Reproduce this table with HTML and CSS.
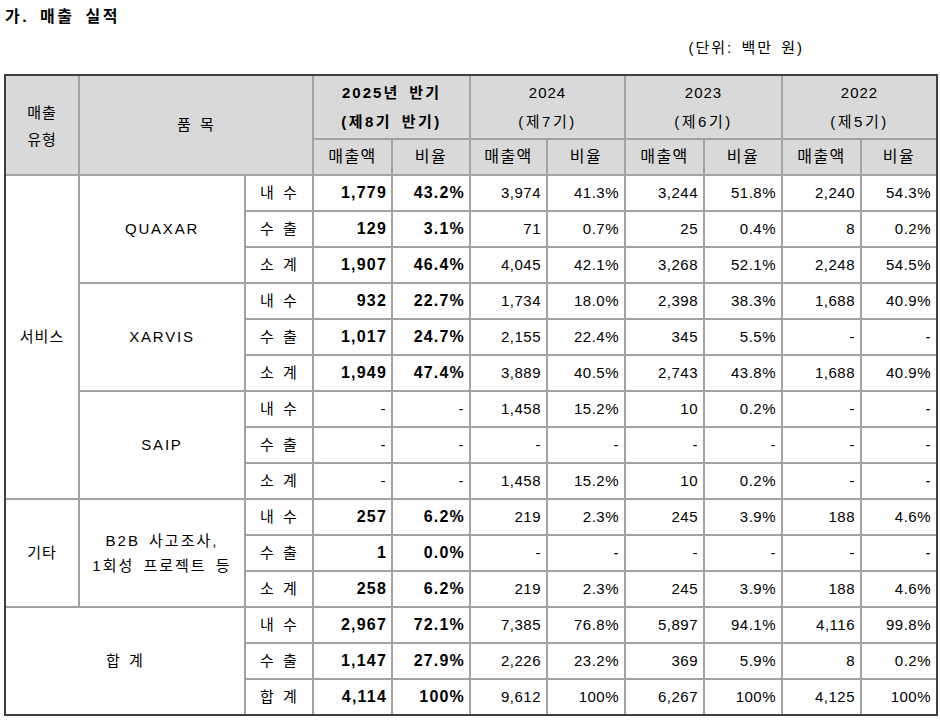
FILE: index.html
```html
<!DOCTYPE html>
<html lang="ko">
<head>
<meta charset="utf-8">
<title>매출 실적</title>
<link rel="stylesheet" href="styles.css">
</head>
<body>
<h1 class="title">가. 매출 실적</h1>
<p class="unit">(단위: 백만 원)</p>
<table class="sales">
  <colgroup>
    <col class="c1"><col class="c2"><col class="c3"><col class="c4"><col class="c5"><col class="c6"><col class="c7"><col class="c8"><col class="c9"><col class="c10"><col class="c11">
  </colgroup>
  <thead>
    <tr class="h1">
      <th rowspan="2" class="type"><span>매출</span><br><span>유형</span></th>
      <th rowspan="2" colspan="2" class="ws">품 목</th>
      <th colspan="2" class="period strong"><span class="y">2025년 반기</span><br><span class="p">(제8기 반기)</span></th>
      <th colspan="2" class="period"><span class="y">2024</span><br><span class="p">(제7기)</span></th>
      <th colspan="2" class="period"><span class="y">2023</span><br><span class="p">(제6기)</span></th>
      <th colspan="2" class="period"><span class="y">2022</span><br><span class="p">(제5기)</span></th>
    </tr>
    <tr class="h2">
      <th class="amt">매출액</th><th class="rat">비율</th>
      <th class="amt">매출액</th><th class="rat">비율</th>
      <th class="amt">매출액</th><th class="rat">비율</th>
      <th class="amt">매출액</th><th class="rat">비율</th>
    </tr>
  </thead>
  <tbody>
    <tr>
      <td rowspan="9" class="label">서비스</td>
      <td rowspan="3" class="label latin">QUAXAR</td>
      <td class="sub">내 수</td>
      <td class="num b">1,779</td><td class="num b">43.2%</td>
      <td class="num">3,974</td><td class="num">41.3%</td>
      <td class="num">3,244</td><td class="num">51.8%</td>
      <td class="num">2,240</td><td class="num">54.3%</td>
    </tr>
    <tr>
      <td class="sub">수 출</td>
      <td class="num b">129</td><td class="num b">3.1%</td>
      <td class="num">71</td><td class="num">0.7%</td>
      <td class="num">25</td><td class="num">0.4%</td>
      <td class="num">8</td><td class="num">0.2%</td>
    </tr>
    <tr>
      <td class="sub">소 계</td>
      <td class="num b">1,907</td><td class="num b">46.4%</td>
      <td class="num">4,045</td><td class="num">42.1%</td>
      <td class="num">3,268</td><td class="num">52.1%</td>
      <td class="num">2,248</td><td class="num">54.5%</td>
    </tr>
    <tr>
      <td rowspan="3" class="label latin">XARVIS</td>
      <td class="sub">내 수</td>
      <td class="num b">932</td><td class="num b">22.7%</td>
      <td class="num">1,734</td><td class="num">18.0%</td>
      <td class="num">2,398</td><td class="num">38.3%</td>
      <td class="num">1,688</td><td class="num">40.9%</td>
    </tr>
    <tr>
      <td class="sub">수 출</td>
      <td class="num b">1,017</td><td class="num b">24.7%</td>
      <td class="num">2,155</td><td class="num">22.4%</td>
      <td class="num">345</td><td class="num">5.5%</td>
      <td class="num">-</td><td class="num">-</td>
    </tr>
    <tr>
      <td class="sub">소 계</td>
      <td class="num b">1,949</td><td class="num b">47.4%</td>
      <td class="num">3,889</td><td class="num">40.5%</td>
      <td class="num">2,743</td><td class="num">43.8%</td>
      <td class="num">1,688</td><td class="num">40.9%</td>
    </tr>
    <tr>
      <td rowspan="3" class="label latin">SAIP</td>
      <td class="sub">내 수</td>
      <td class="num">-</td><td class="num">-</td>
      <td class="num">1,458</td><td class="num">15.2%</td>
      <td class="num">10</td><td class="num">0.2%</td>
      <td class="num">-</td><td class="num">-</td>
    </tr>
    <tr>
      <td class="sub">수 출</td>
      <td class="num">-</td><td class="num">-</td>
      <td class="num">-</td><td class="num">-</td>
      <td class="num">-</td><td class="num">-</td>
      <td class="num">-</td><td class="num">-</td>
    </tr>
    <tr>
      <td class="sub">소 계</td>
      <td class="num">-</td><td class="num">-</td>
      <td class="num">1,458</td><td class="num">15.2%</td>
      <td class="num">10</td><td class="num">0.2%</td>
      <td class="num">-</td><td class="num">-</td>
    </tr>
    <tr>
      <td rowspan="3" class="label">기타</td>
      <td rowspan="3" class="label multi">B2B 사고조사,<br>1회성 프로젝트 등</td>
      <td class="sub">내 수</td>
      <td class="num b">257</td><td class="num b">6.2%</td>
      <td class="num">219</td><td class="num">2.3%</td>
      <td class="num">245</td><td class="num">3.9%</td>
      <td class="num">188</td><td class="num">4.6%</td>
    </tr>
    <tr>
      <td class="sub">수 출</td>
      <td class="num b">1</td><td class="num b">0.0%</td>
      <td class="num">-</td><td class="num">-</td>
      <td class="num">-</td><td class="num">-</td>
      <td class="num">-</td><td class="num">-</td>
    </tr>
    <tr>
      <td class="sub">소 계</td>
      <td class="num b">258</td><td class="num b">6.2%</td>
      <td class="num">219</td><td class="num">2.3%</td>
      <td class="num">245</td><td class="num">3.9%</td>
      <td class="num">188</td><td class="num">4.6%</td>
    </tr>
    <tr>
      <td rowspan="3" colspan="2" class="label ws bottom">합 계</td>
      <td class="sub">내 수</td>
      <td class="num b">2,967</td><td class="num b">72.1%</td>
      <td class="num">7,385</td><td class="num">76.8%</td>
      <td class="num">5,897</td><td class="num">94.1%</td>
      <td class="num">4,116</td><td class="num">99.8%</td>
    </tr>
    <tr>
      <td class="sub">수 출</td>
      <td class="num b">1,147</td><td class="num b">27.9%</td>
      <td class="num">2,226</td><td class="num">23.2%</td>
      <td class="num">369</td><td class="num">5.9%</td>
      <td class="num">8</td><td class="num">0.2%</td>
    </tr>
    <tr class="last">
      <td class="sub">합 계</td>
      <td class="num b">4,114</td><td class="num b">100%</td>
      <td class="num">9,612</td><td class="num">100%</td>
      <td class="num">6,267</td><td class="num">100%</td>
      <td class="num">4,125</td><td class="num">100%</td>
    </tr>
  </tbody>
</table>
</body>
</html>
```

FILE: styles.css
```css
html, body {
  margin: 0;
  padding: 0;
  background: #ffffff;
}

body {
  font-family: "Liberation Sans", "Noto Sans CJK KR", sans-serif;
  font-size: 15px;
  color: #000000;
  letter-spacing: 1px;
}

.title {
  margin: 0;
  padding: 8px 0 0 5px;
  font-size: 16px;
  font-weight: bold;
  line-height: 18px;
  letter-spacing: 2.5px;
  word-spacing: 4px;
}

.unit {
  margin: 13px 0 0 0;
  padding-right: 136px;
  text-align: right;
  line-height: 17px;
  letter-spacing: 2px;
  word-spacing: 2px;
}

.sales {
  margin: 18px 0 0 4px;
  width: 934px;
  table-layout: fixed;
  border-collapse: separate;
  border-spacing: 0;
  border: 2px solid #3f3f3f;
}

.c1 { width: 74px; }
.c2 { width: 166px; }
.c3 { width: 68px; }
.c4 { width: 79px; }
.c5 { width: 78px; }
.c6 { width: 77px; }
.c7 { width: 78px; }
.c8 { width: 79px; }
.c9 { width: 78px; }
.c10 { width: 79px; }
.c11 { width: 74px; }

.sales th,
.sales td {
  box-sizing: border-box;
  padding: 0;
  border-right: 2px solid #a3a3a3;
  border-bottom: 2px solid #a3a3a3;
  vertical-align: middle;
  text-align: center;
  font-weight: normal;
  white-space: nowrap;
  line-height: 20px;
}

.sales tr > :last-child {
  border-right: 0;
}

.sales th {
  background: #d9d9d9;
}

.sales .h1 {
  height: 64px;
}

.sales .h2 {
  height: 36px;
}

.sales tbody tr {
  height: 36px;
}

.sales tbody tr.last {
  height: 34px;
}

.sales tr.last td,
.sales td.bottom {
  border-bottom: 0;
}

.sales .type {
  line-height: 27px;
  padding-top: 2px;
}

.sales .period {
  line-height: 29px;
  padding-top: 0;
}

.sales .period .p {
  letter-spacing: 2.5px;
  word-spacing: 3px;
}

.sales .strong {
  font-weight: bold;
}

.sales .strong .y {
  letter-spacing: 2px;
  word-spacing: 4px;
}

.sales .amt,
.sales .rat {
  font-size: 16px;
  letter-spacing: 1.5px;
}

.sales .ws,
.sales .sub {
  word-spacing: 3px;
}

.sales .latin {
  letter-spacing: 1.8px;
}

.sales .multi {
  line-height: 25px;
  letter-spacing: 2px;
  word-spacing: 3px;
}

.sales .num {
  text-align: right;
  padding-right: 5px;
  letter-spacing: 0.5px;
}

.sales .b {
  font-size: 16px;
  font-weight: bold;
  letter-spacing: 1.2px;
  padding-right: 4px;
}
```
